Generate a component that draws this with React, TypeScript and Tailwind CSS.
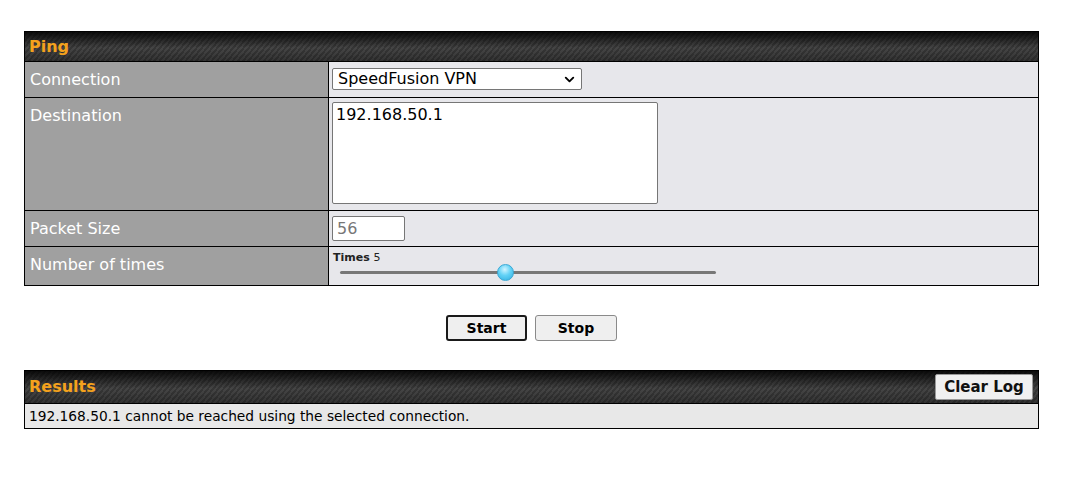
import { ChevronDown } from 'lucide-react';

const HEADER_BG =
  'bg-[linear-gradient(to_bottom,rgba(0,0,0,0.85)_0%,rgba(0,0,0,0.1)_55%,rgba(0,0,0,0.35)_100%),repeating-linear-gradient(-50deg,#3c3c3c_0px,#3c3c3c_2px,#4d4d4d_2px,#4d4d4d_4px)]';

function Label({ children }: { children: string }) {
  return (
    <div className="bg-[#a0a0a0] text-white text-[16px] leading-6 pl-[5px] pt-[6px] border-r border-black">
      {children}
    </div>
  );
}

export default function App() {
  const times = 5;
  const pct = 44;

  return (
    <div className="min-h-screen bg-white pt-[31px] px-[24px] font-['DejaVu_Sans',Verdana,sans-serif] text-black">
      <div className="w-[1015px]">
        {/* Ping section */}
        <div className="border border-black">
          <div className={`${HEADER_BG} h-[29px] flex items-center px-[4px]`}>
            <span className="text-[#f4a21d] font-bold text-[16px]">Ping</span>
          </div>

          <div className="grid grid-cols-[304px_1fr] border-t border-black h-[36px]">
            <Label>Connection</Label>
            <div className="bg-[#e7e7eb] pl-[3px] pt-[6px]">
              <div className="w-[250px] h-[22px] bg-white border border-[#767676] rounded-[2px] flex items-center justify-between pl-[5px] pr-[4px] text-[16px]">
                <span>SpeedFusion VPN</span>
                <ChevronDown size={15} strokeWidth={3} />
              </div>
            </div>
          </div>

          <div className="grid grid-cols-[304px_1fr] border-t border-black h-[113px] overflow-hidden">
            <Label>Destination</Label>
            <div className="bg-[#e7e7eb] pl-[3px] pt-[4px] overflow-hidden">
              <textarea
                readOnly
                value="192.168.50.1"
                className="block w-[326px] h-[102px] bg-white border border-[#767676] rounded-[2px] px-[3px] py-[2px] text-[16px] leading-5 resize-none outline-none font-['DejaVu_Sans',Verdana,sans-serif]"
              />
            </div>
          </div>

          <div className="grid grid-cols-[304px_1fr] border-t border-black h-[36px]">
            <Label>Packet Size</Label>
            <div className="bg-[#e7e7eb] pl-[3px] pt-[5px]">
              <div className="w-[73px] h-[25px] bg-white border border-[#767676] rounded-[2px] flex items-center pl-[4px] text-[16px] text-[#777]">
                56
              </div>
            </div>
          </div>

          <div className="grid grid-cols-[304px_1fr] border-t border-black h-[39px]">
            <Label>Number of times</Label>
            <div className="bg-[#e7e7eb] pl-[4px] pt-[4px]">
              <div className="text-[11px] font-bold leading-[14px] text-[#222]">
                Times <span className="font-normal">{times}</span>
              </div>
              <div className="relative w-[376px] ml-[7px] mt-[6px] h-[3px] bg-[#777] rounded-full">
                <div
                  className="absolute top-[-7px] w-[17px] h-[17px] -ml-[8px] rounded-full border border-[#3aa8d4] bg-[radial-gradient(circle_at_45%_30%,#d0f4ff_0%,#62d2f6_45%,#30addf_100%)]"
                  style={{ left: `${pct}%` }}
                />
              </div>
            </div>
          </div>
        </div>

        {/* Actions */}
        <div className="flex justify-center gap-[8px] mt-[29px]">
          <button className="w-[81px] h-[26px] bg-[#efefef] border-2 border-[#1a1a1a] rounded-[3px] text-[14px] font-bold">
            Start
          </button>
          <button className="w-[82px] h-[26px] bg-[#efefef] border border-[#8a8a8a] rounded-[3px] text-[14px] font-bold">
            Stop
          </button>
        </div>

        {/* Results section */}
        <div className="border border-black mt-[29px]">
          <div className={`${HEADER_BG} h-[32px] flex items-center justify-between pl-[4px] pr-[5px]`}>
            <span className="text-[#f4a21d] font-bold text-[16px]">Results</span>
            <button className="w-[98px] h-[26px] bg-[#f0f0f0] border border-[#999] rounded-[2px] text-[15px] font-bold text-[#111]">
              Clear Log
            </button>
          </div>
          <div className="bg-[#e8e8e8] border-t border-black h-[25px] flex items-center pl-[4px] text-[13.75px]">
            192.168.50.1 cannot be reached using the selected connection.
          </div>
        </div>
      </div>
    </div>
  );
}
